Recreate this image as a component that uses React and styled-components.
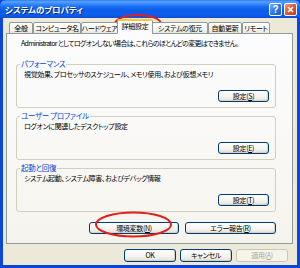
import React from 'react'
import styled, { createGlobalStyle } from 'styled-components'

const GlobalStyle = createGlobalStyle`
  html, body {
    margin: 0;
    padding: 0;
    background: #ece9d8;
  }
  * {
    box-sizing: border-box;
  }
`

const font = `"Noto Sans CJK JP", "Noto Sans", sans-serif`

const tabs = [
  { label: '全般', width: 24 },
  { label: 'コンピュータ名', width: 48 },
  { label: 'ハードウェア', width: 37 },
  { label: '詳細設定', width: 36, active: true },
  { label: 'システムの復元', width: 56 },
  { label: '自動更新', width: 34 },
  { label: 'リモート', width: 28 },
]

const groups = [
  {
    title: 'パフォーマンス',
    text: '視覚効果、プロセッサのスケジュール、メモリ使用、および仮想メモリ',
    key: 'S',
  },
  {
    title: 'ユーザー プロファイル',
    text: 'ログオンに関連したデスクトップ設定',
    key: 'E',
  },
  {
    title: '起動と回復',
    text: 'システム起動、システム障害、およびデバッグ情報',
    key: 'T',
  },
]

const App = () => {
  return (
    <>
      <GlobalStyle />
      <Window>
        <TitleBar>
          <Title>システムのプロパティ</Title>
          <Caption>
            <CapButton>?</CapButton>
            <CapButton close>
              <svg width='7' height='7' viewBox='0 0 7 7'>
                <path d='M1 1L6 6M6 1L1 6' stroke='#fff' strokeWidth='1.6' />
              </svg>
            </CapButton>
          </Caption>
        </TitleBar>
        <Body>
          <TabStrip>
            {tabs.map((t) => (
              <Tab key={t.label} width={t.width} active={t.active}>
                {t.label}
              </Tab>
            ))}
          </TabStrip>
          <Panel>
            <Note>
              Administrator としてログオンしない場合は、これらのほとんどの変更はできません。
            </Note>
            {groups.map((g) => (
              <Group key={g.title}>
                <Legend>{g.title}</Legend>
                <GroupText>{g.text}</GroupText>
                <GroupFoot>
                  <Button width={51}>
                    設定(<u>{g.key}</u>)
                  </Button>
                </GroupFoot>
              </Group>
            ))}
            <EnvRow>
              <Button width={90}>
                環境変数(<u>N</u>)
              </Button>
              <Button width={91}>
                エラー報告(<u>R</u>)
              </Button>
            </EnvRow>
          </Panel>
          <Footer>
            <Button width={52} tall>
              OK
            </Button>
            <Button width={52} tall>
              キャンセル
            </Button>
            <Button width={52} tall disabled>
              適用(<u>A</u>)
            </Button>
          </Footer>
        </Body>
        <Marks width='300' height='268' viewBox='0 0 300 268'>
          <ellipse cx='138' cy='24' rx='23' ry='9' />
          <ellipse cx='133.5' cy='224.5' rx='37.5' ry='12' />
        </Marks>
      </Window>
    </>
  )
}

export default App

const Window = styled.div`
  position: relative;
  width: 300px;
  height: 268px;
  display: flex;
  flex-direction: column;
  background: #0a46d8;
  font-family: ${font};
  font-feature-settings: 'palt';
  color: #000;
`

const TitleBar = styled.div`
  height: 18px;
  flex: none;
  display: flex;
  align-items: center;
  justify-content: space-between;
  padding: 0 3px 0 5px;
  border-radius: 6px 6px 0 0;
  background: linear-gradient(
    to bottom,
    #2a7cf4 0%,
    #5aa2ff 10%,
    #3b8cff 20%,
    #1569f2 40%,
    #0d5ce6 60%,
    #0d5ef0 80%,
    #0b4fd4 100%
  );
`

const Title = styled.div`
  color: #fff;
  font-size: 8.5px;
  font-weight: 700;
  letter-spacing: -0.1px;
  text-shadow: 1px 1px 0 #0a2a8a;
  line-height: 10px;
`

const Caption = styled.div`
  display: flex;
  gap: 2px;
  margin-top: 1px;
`

const CapButton = styled.div`
  width: 13px;
  height: 13px;
  display: flex;
  align-items: center;
  justify-content: center;
  border: 1px solid #fff;
  border-radius: 2px;
  color: #fff;
  font-family: 'Liberation Sans', sans-serif;
  font-weight: 700;
  font-size: 10px;
  line-height: 1;
  background: ${(p) =>
    p.close
      ? 'linear-gradient(135deg, #f0a080 0%, #e25a33 45%, #c8381c 100%)'
      : 'linear-gradient(135deg, #7eb0ff 0%, #2f74ee 50%, #1e5bd8 100%)'};
`

const Body = styled.div`
  flex: 1;
  display: flex;
  flex-direction: column;
  margin: 0 3px 3px 3px;
  padding: 1px 4px 0 3px;
  background: #ece9d8;
`

const TabStrip = styled.div`
  display: flex;
  align-items: flex-end;
  height: 15px;
  padding-left: 3px;
  position: relative;
  z-index: 1;
  margin-bottom: -1px;
`

const Tab = styled.div`
  width: ${(p) => p.width}px;
  height: ${(p) => (p.active ? 15 : 12)}px;
  display: flex;
  align-items: center;
  justify-content: center;
  font-size: 7px;
  line-height: 10px;
  letter-spacing: -0.3px;
  white-space: nowrap;
  overflow: hidden;
  border: 1px solid #919b9c;
  border-bottom: ${(p) => (p.active ? '1px solid #fcfcfe' : '1px solid #919b9c')};
  border-top: ${(p) => (p.active ? '2px solid #ffc73c' : '1px solid #919b9c')};
  border-radius: 2px 2px 0 0;
  margin-right: ${(p) => (p.active ? -1 : 0)}px;
  margin-left: ${(p) => (p.active ? -1 : 0)}px;
  padding-bottom: ${(p) => (p.active ? 2 : 0)}px;
  background: ${(p) =>
    p.active ? '#fcfcfe' : 'linear-gradient(to bottom, #fff, #f3f2ec 70%, #e8e6dc)'};
`

const Panel = styled.div`
  height: 211px;
  flex: none;
  display: flex;
  flex-direction: column;
  padding: 4px 16px 0 9px;
  border: 1px solid #919b9c;
  background: linear-gradient(to bottom, #fcfcfe, #f7f6f1 80%, #f4f3ee);
`

const Note = styled.div`
  font-size: 7px;
  line-height: 10px;
  letter-spacing: -0.7px;
  padding-left: 5px;
  white-space: nowrap;
`

const Group = styled.fieldset`
  margin: 12px 0 0 0;
  padding: 1px 6px 5px 6px;
  border: 1px solid #d0d0bf;
  border-radius: 3px;
  min-width: 0;
  & + & {
    margin-top: 4px;
  }
`

const Legend = styled.legend`
  padding: 0 1px;
  margin-left: -3px;
  font-size: 7.5px;
  line-height: 8px;
  letter-spacing: -0.3px;
  color: #0046d5;
`

const GroupText = styled.div`
  font-size: 7px;
  line-height: 10px;
  letter-spacing: -0.35px;
  padding-left: 1px;
  white-space: nowrap;
`

const GroupFoot = styled.div`
  display: flex;
  justify-content: flex-end;
  margin-top: 11px;
`

const Button = styled.div`
  width: ${(p) => p.width}px;
  height: ${(p) => (p.tall ? 13 : 12)}px;
  display: flex;
  align-items: center;
  justify-content: center;
  font-size: 7px;
  line-height: 9px;
  letter-spacing: -0.3px;
  white-space: nowrap;
  border: 1px solid ${(p) => (p.disabled ? '#c9c7ba' : '#003c74')};
  border-radius: 3px;
  color: ${(p) => (p.disabled ? '#aca899' : '#000')};
  background: ${(p) =>
    p.disabled
      ? '#f5f4ea'
      : 'linear-gradient(to bottom, #ffffff 0%, #f4f3ee 60%, #e3e0d2 100%)'};
  box-shadow: ${(p) => (p.disabled ? 'none' : 'inset -1px -1px 0 #d6d0c5')};
  u {
    text-underline-offset: 1px;
  }
`

const EnvRow = styled.div`
  display: flex;
  justify-content: flex-end;
  gap: 6px;
  margin-top: 10px;
`

const Footer = styled.div`
  display: flex;
  justify-content: flex-end;
  gap: 4px;
  margin-top: 5px;
  padding-right: 5px;
`

const Marks = styled.svg`
  position: absolute;
  left: 0;
  top: 0;
  pointer-events: none;
  ellipse {
    fill: none;
    stroke: #e0201a;
    stroke-width: 2;
  }
`
